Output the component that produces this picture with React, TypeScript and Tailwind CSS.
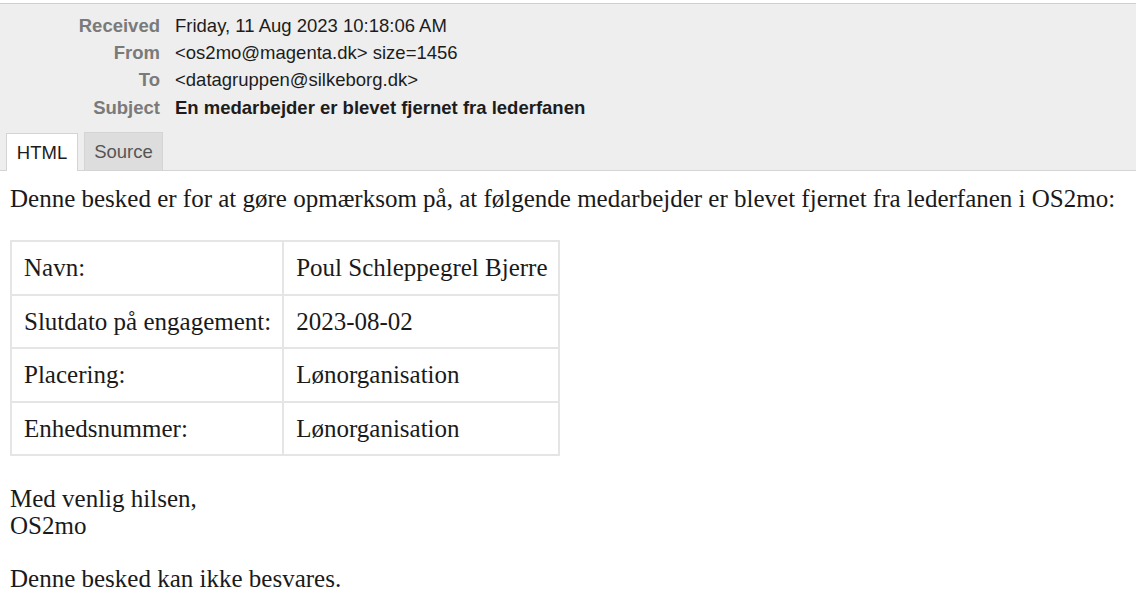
export default function App() {
  const rows: [string, string][] = [
    ["Navn:", "Poul Schleppegrel Bjerre"],
    ["Slutdato på engagement:", "2023-08-02"],
    ["Placering:", "Lønorganisation"],
    ["Enhedsnummer:", "Lønorganisation"],
  ];
  const header: [string, string, boolean][] = [
    ["Received", "Friday, 11 Aug 2023 10:18:06 AM", false],
    ["From", "<os2mo@magenta.dk> size=1456", false],
    ["To", "<datagruppen@silkeborg.dk>", false],
    ["Subject", "En medarbejder er blevet fjernet fra lederfanen", true],
  ];
  return (
    <div className="w-[1136px] h-[615px] bg-white overflow-hidden">
      <div className="mt-[3px] border-t border-[#cfcfcf] bg-[#eeeeee] font-['Liberation_Sans',Arial,sans-serif] text-[18.5px]">
        <div className="pt-[8px] pb-[11px]">
          {header.map(([k, v, b]) => (
            <div key={k} className="flex h-[27.3px] items-center">
              <div className="w-[160px] text-right font-bold text-[#7a7a7a]">{k}</div>
              <div className={"pl-[15px] text-[#1c1c1c] " + (b ? "font-bold" : "")}>{v}</div>
            </div>
          ))}
        </div>
        <div className="flex items-end gap-[6px] pl-[6px] border-b border-[#d4d4d4] h-[39px]">
          <div className="h-[38px] w-[72px] bg-white border border-b-0 border-[#d4d4d4] flex items-center justify-center text-[#1c1c1c] -mb-px">HTML</div>
          <div className="h-[38px] w-[79px] bg-[#dddddd] border border-b-0 border-[#d4d4d4] flex items-center justify-center text-[#555555]">Source</div>
        </div>
      </div>
      <div className="pl-[10px] pt-[14px] font-['Liberation_Serif','Times_New_Roman',serif] text-[25px] leading-[27px] text-[#1a1a1a]">
        <p>Denne besked er for at gøre opmærksom på, at følgende medarbejder er blevet fjernet fra lederfanen i OS2mo:</p>
        <table className="mt-[28px] border-collapse border-2 border-[#e5e5e5]">
          <tbody>
            {rows.map(([a, b], i) => (
              <tr key={i} className="h-[53.5px]">
                <td className="border-2 border-[#e5e5e5] pl-[12px] pr-[11px]">{a}</td>
                <td className="border-2 border-[#e5e5e5] pl-[12px] pr-[11px]">{b}</td>
              </tr>
            ))}
          </tbody>
        </table>
        <p className="mt-[29px]">Med venlig hilsen,<br />OS2mo</p>
        <p className="mt-[26px]">Denne besked kan ikke besvares.</p>
      </div>
    </div>
  );
}
